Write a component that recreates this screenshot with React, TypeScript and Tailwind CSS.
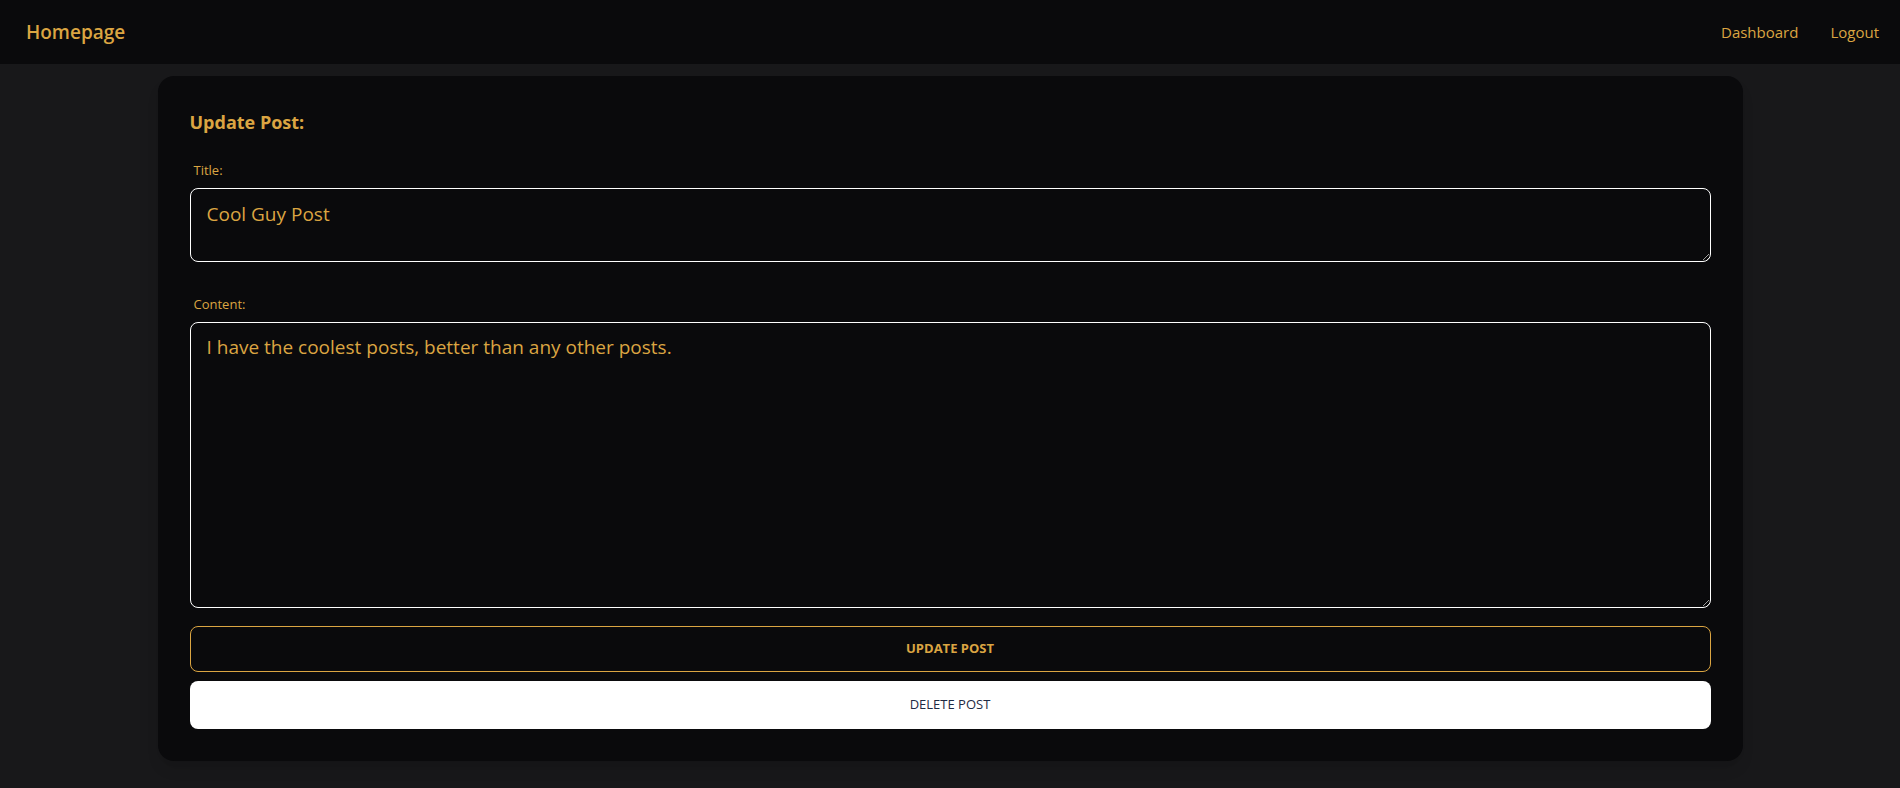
export default function App() {
  return (
    <div className="min-h-screen bg-[#18181a] font-['Open_Sans',sans-serif]">
      <nav className="flex h-16 items-center justify-between bg-[#0a0a0c] pl-[26px] pr-[21px]">
        <a href="#" className="text-[19px] font-semibold text-[#dba542]">
          Homepage
        </a>
        <div className="flex items-center gap-8 text-[15px] text-[#dba542]">
          <a href="#">Dashboard</a>
          <a href="#">Logout</a>
        </div>
      </nav>

      <main className="mx-auto mt-3 w-[1585px] rounded-2xl bg-[#0a0a0c] p-8 shadow-lg">
        <h2 className="mb-6 text-[18px] leading-7 font-bold text-[#dba542]">Update Post:</h2>

        <form className="flex flex-col">
          <label className="mb-2 ml-1 text-[13px] leading-5 text-[#dba542]">Title:</label>
          <textarea
            defaultValue="Cool Guy Post"
            className="mb-8 h-[74px] rounded-lg border border-white bg-transparent px-4 py-[11px] text-[19px] leading-7 text-[#dba542] outline-none"
          />

          <label className="mb-2 ml-1 text-[13px] leading-5 text-[#dba542]">Content:</label>
          <textarea
            defaultValue="I have the coolest posts, better than any other posts."
            className="h-[286px] rounded-lg border border-white bg-transparent px-4 py-[10px] text-[19px] leading-7 text-[#dba542] outline-none"
          />

          <button
            type="button"
            className="mt-[18px] h-[46px] rounded-lg border border-[#dba542] text-[13px] font-bold uppercase text-[#dba542]"
          >
            Update Post
          </button>
          <button
            type="button"
            className="mt-[9px] h-12 rounded-lg bg-white text-[13px] uppercase text-[#1e2a44]"
          >
            Delete Post
          </button>
        </form>
      </main>
    </div>
  )
}
